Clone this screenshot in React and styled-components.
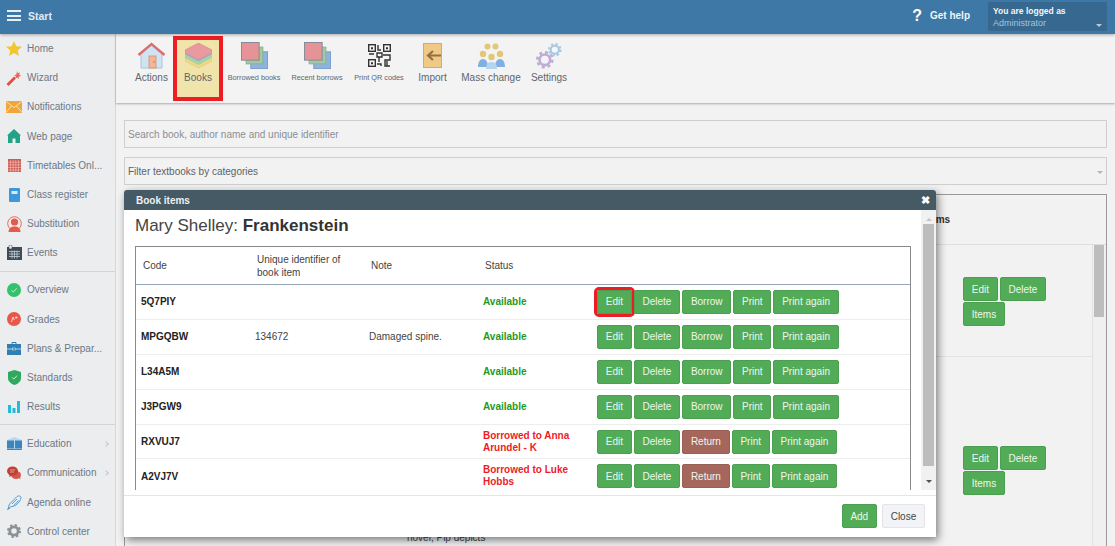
import React from 'react'
import styled, { createGlobalStyle } from 'styled-components'

const GlobalStyle = createGlobalStyle`
  html, body { margin: 0; padding: 0; }
  body {
    font-family: "Liberation Sans", Arial, sans-serif;
    font-size: 10px;
    background: #f2f2f2;
  }
  * { box-sizing: border-box; }
`

const Page = styled.div`
  position: relative;
  width: 1115px;
  height: 546px;
  overflow: hidden;
  background: #f2f2f2;
`
const TopBar = styled.header`
  display: flex;
  align-items: center;
  height: 34px;
  padding: 0 8px 1px 7px;
  background: #3d78a6;
  color: #fff;
  box-shadow: 0 1px 3px rgba(0, 0, 0, .3);
  position: relative;
  z-index: 2;
`
const Burger = styled.div`
  width: 14px;
  height: 11px;
  margin: 0 7px 2px 0;
  border-top: 2px solid #e8eff5;
  border-bottom: 2px solid #e8eff5;
  position: relative;
  &::after {
    content: '';
    position: absolute;
    left: 0;
    right: 0;
    top: 2.5px;
    height: 2px;
    background: #e8eff5;
  }
`
const StartLabel = styled.span`
  margin-bottom: 2px;
  font-size: 10.5px;
  font-weight: 700;
  opacity: .85;
`
const Help = styled.div`
  display: flex;
  align-items: center;
  margin: 0 18px 2px auto;
  font-size: 10px;
  font-weight: 700;
  color: #eef3f7;
`
const HelpMark = styled.span`
  font-size: 16px;
  font-weight: 700;
  margin-right: 8px;
  margin-left: 2px;
  color: #fff;
`
const UserBox = styled.div`
  position: relative;
  width: 119px;
  height: 29px;
  padding: 4px 5px;
  border-radius: 2px;
  background: #37688f;
  line-height: 11.5px;
  &::after {
    content: '';
    position: absolute;
    right: 5px;
    top: 22px;
    border: 3px solid transparent;
    border-top-color: #b9cde0;
  }
`
const UserTitle = styled.div`
  font-size: 8.5px;
  font-weight: 700;
  color: #f2f6f9;
`
const UserName = styled.div`
  font-size: 9px;
  color: #a5c3df;
`
const Layout = styled.div`
  display: flex;
  height: 512px;
`
const Sidebar = styled.nav`
  flex: none;
  width: 116px;
  background: #ecedef;
  border-right: 1px solid #d6d7d9;
`
const NavDivider = styled.div`
  height: 1px;
  margin: 3px 0 3.8px;
  background: #d4d5d7;
`
const NavItem = styled.div`
  display: flex;
  align-items: center;
  height: 29.2px;
  padding-left: 6px;
  color: #6d7884;
  font-size: 10px;
`
const NavIcon = styled.span`
  display: flex;
  flex: none;
  justify-content: center;
  width: 16px;
  margin-right: 5px;
`
const NavText = styled.span`
  white-space: nowrap;
`
const NavChevron = styled.span`
  position: absolute;
  left: 104px;
  width: 4px;
  height: 4px;
  border-top: 1px solid #c5c7ca;
  border-right: 1px solid #c5c7ca;
  transform: rotate(45deg);
`
const Workspace = styled.main`
  flex: 1;
  min-width: 0;
`
const Toolbar = styled.div`
  display: flex;
  height: 69px;
  padding: 2px 0 0 14px;
  background: #f3f3f3;
  box-shadow: 0 1px 2px rgba(0, 0, 0, .3);
`
const Tool = styled.div`
  display: flex;
  flex-direction: column;
  align-items: center;
  width: ${p => p.$width}px;
  height: 65px;
  padding-top: 2px;
  border: 4px solid ${p => (p.$active ? '#ee1c25' : 'transparent')};
  background: ${p => (p.$active ? '#f0e4aa' : 'transparent')};
  color: #5d6670;
`
const ToolIcon = styled.div`
  display: flex;
  align-items: center;
  justify-content: center;
  height: 27px;
`
const ToolLabel = styled.div`
  margin-top: 3px;
  line-height: 12px;
  white-space: nowrap;
  font-size: ${p => (p.$small ? '7.3px' : '10px')};
`
const Content = styled.div`
  padding: 17px 8px 0;
`
const Field = styled.div`
  position: relative;
  display: flex;
  align-items: center;
  height: 28px;
  margin-bottom: 9px;
  padding-left: 3px;
  border: 1px solid #cfcfcf;
  color: ${p => (p.$dark ? '#5c6268' : '#8a8f94')};
  font-size: 10px;
`
const FieldCaret = styled.span`
  position: absolute;
  right: 3px;
  top: 13px;
  border: 3px solid transparent;
  border-top-color: #b5b5b5;
`
const Panel = styled.section`
  height: 400px;
  border: 1px solid #999;
`
const PanelHead = styled.div`
  display: grid;
  grid-template-columns: 799px 1fr;
  align-items: center;
  height: 50px;
  border-bottom: 1px solid #dedede;
  color: #333;
  font-size: 10px;
  font-weight: 700;
`
const PanelBody = styled.div`
  display: flex;
`
const PanelRows = styled.div`
  flex: 1;
`
const PanelRow = styled.div`
  display: grid;
  grid-template-columns: 282px 517px 1fr;
  height: ${p => p.$height}px;
  border-bottom: 1px solid #e2e2e2;
`
const PanelActions = styled.div`
  display: flex;
  flex-wrap: wrap;
  align-content: flex-start;
  row-gap: 1px;
  padding: ${p => p.$top}px 40px 0 39px;
`
const PanelText = styled.div`
  padding-top: 175px;
  color: #444;
  font-size: 10px;
`
const PanelScroll = styled.div`
  flex: none;
  width: 14px;
  height: 400px;
  padding: 0 2px 0 1px;
  background: #f0f0f0;
  border-left: 1px solid #e2e2e2;
`
const PanelThumb = styled.div`
  height: 72px;
  background: #bdbdbd;
`
const Button = styled.button`
  height: 24px;
  margin: 0 2px 0 0;
  padding: 0 7.75px;
  border: 1px solid #4c9f51;
  border-radius: 2px;
  background: ${p => (p.$tone === 'return' ? '#a5665b' : '#52ab57')};
  border-color: ${p => (p.$tone === 'return' ? '#9a5f55' : '#4c9f51')};
  color: #eef6ee;
  font: 10px "Liberation Sans", Arial, sans-serif;
  outline: ${p => (p.$marked ? '3px solid #ee1c25' : 'none')};
  white-space: nowrap;
`
const CloseButton = styled(Button)`
  margin: 0;
  background: #f3f4f8;
  border-color: #e3e4e8;
  color: #444;
`
const Modal = styled.div`
  position: absolute;
  left: 124px;
  top: 190px;
  width: 812px;
  height: 347px;
  border-radius: 3px 3px 0 0;
  background: #fff;
  box-shadow: 2px 3px 8px rgba(0, 0, 0, .5);
`
const ModalHead = styled.div`
  display: flex;
  align-items: center;
  justify-content: space-between;
  height: 20px;
  padding: 0 6px 0 12px;
  border-radius: 3px 3px 0 0;
  background: #455a64;
  color: #eef1f2;
  font-size: 10px;
  font-weight: 700;
`
const ModalClose = styled.span`
  font-size: 11px;
  color: #fff;
`
const ModalBody = styled.div`
  display: flex;
  height: 280px;
`
const ModalMain = styled.div`
  flex: 1;
  min-width: 0;
  padding: 0 10px 0 11px;
  overflow: hidden;
`
const BookTitle = styled.h2`
  height: 36px;
  margin: 0;
  padding-top: 7px;
  color: #444;
  font-size: 17px;
  line-height: 18px;
  font-weight: 400;
  b { font-weight: 700; color: #333; }
`
const Items = styled.div`
  border: 1px solid #8a8a8a;
  border-bottom: 0;
`
const ItemRow = styled.div`
  display: grid;
  grid-template-columns: repeat(4, 114px) 1fr;
  align-items: center;
  height: ${p => (p.$head ? 38 : 34.9)}px;
  border-bottom: 1px solid ${p => (p.$head ? '#94a6b8' : '#eeeeee')};
`
const HeadCell = styled.div`
  padding: 2px 0 0 7px;
  color: #444;
  font-size: 10px;
  line-height: 12.5px;
`
const Code = styled.div`
  padding-left: 5px;
  color: #222;
  font-size: 10px;
  font-weight: 700;
`
const Cell = styled.div`
  padding-left: 5px;
  color: #444;
  font-size: 10px;
`
const Status = styled.div`
  padding: 0 20px 0 5px;
  color: ${p => (p.$borrowed ? '#ee1c25' : '#1f9a1f')};
  font-size: 10px;
  font-weight: 700;
  line-height: 12px;
`
const RowActions = styled.div`
  display: flex;
  padding-left: 5px;
`
const ScrollBar = styled.div`
  display: flex;
  flex: none;
  flex-direction: column;
  align-items: center;
  width: 15px;
  background: #f1f1f1;
`
const ScrollArrow = styled.span`
  height: 14px;
  border: 3px solid transparent;
  border-bottom-color: ${p => (p.$up ? '#c4c4c4' : 'transparent')};
  border-top-color: ${p => (p.$up ? 'transparent' : '#505050')};
  transform: translateY(${p => (p.$up ? '-3px' : '14px')});
`
const ScrollThumb = styled.div`
  width: 11px;
  height: 242px;
  background: #bdbdbd;
`
const ModalFoot = styled.div`
  display: flex;
  justify-content: flex-end;
  gap: 3px;
  height: 47px;
  margin-top: 5px;
  padding: 8px 11px 0;
  border-top: 1px solid #e5e5e5;
`

const Star = () => (
  <svg width="16" height="15" viewBox="0 0 16 15"><path d="M8 0l2.3 5.2 5.7.5-4.3 3.7 1.3 5.6L8 12l-5 3 1.3-5.6L0 5.7l5.700-.5z" fill="#f2c62f" /></svg>
)
const Wand = () => (
  <svg width="16" height="16" viewBox="0 0 16 16"><path d="M.5 14L8 6.500l2 2L2.500 16z" fill="#dd5044" /><path d="M11 1l.8 2.200L14 2.500l-.8 2.300 2 1.200-2.400.6.2 2.400-1.800-1.600-1.900 1.200.6-2.300-2-1.300 2.400-.3z" fill="#e8665a" /></svg>
)
const Mail = () => (
  <svg width="16" height="12" viewBox="0 0 16 12"><rect width="16" height="12" fill="#f0a63a" /><path d="M0 .5l8 6 8-6M0 11.500l5.500-6.500M16 11.500L10.500 5" fill="none" stroke="#fbe0b0" strokeWidth="1" /></svg>
)
const Home = () => (
  <svg width="14" height="14" viewBox="0 0 14 14"><path d="M7 0l7 6.500h-1V14H8.500V9.500h-3V14H1V6.500H0z" fill="#22a386" /></svg>
)
const Grid = () => (
  <svg width="13" height="13" viewBox="0 0 13 13"><rect width="13" height="13" fill="#cf5a50" /><path d="M0 3.200h13M0 5.800h13M0 8.400h13M0 11h13M2.600 1v12M5.200 1v12M7.800 1v12M10.400 1v12" stroke="#f0b9b3" strokeWidth=".7" /></svg>
)
const Notebook = () => (
  <svg width="11" height="14" viewBox="0 0 11 14"><rect width="11" height="14" rx="1" fill="#3e97d8" /><rect x="2.500" y="3" width="6" height="3" fill="#d5e9f7" /></svg>
)
const Person = () => (
  <svg width="15" height="16" viewBox="0 0 15 16"><circle cx="7.500" cy="7.500" r="6.800" fill="none" stroke="#e9695c" strokeWidth="1" /><circle cx="7.500" cy="6" r="3.600" fill="#e55a4d" /><path d="M1.500 16c.3-4 2.500-5.500 6-5.500s5.700 1.500 6 5.500z" fill="#e55a4d" /></svg>
)
const Calendar = () => (
  <svg width="15" height="15" viewBox="0 0 15 15"><rect y="2" width="15" height="13" fill="#3d4c58" /><rect x="2" y="0" width="3" height="4" rx="1" fill="#eef" stroke="#3d4c58" strokeWidth=".6" /><path d="M2 6.500h11M2 9h11M2 11.500h11M5 5.500v8M7.500 5.500v8M10 5.500v8" stroke="#c7cdd2" strokeWidth=".8" /></svg>
)
const Check = () => (
  <svg width="14" height="14" viewBox="0 0 14 14"><circle cx="7" cy="7" r="7" fill="#34c26d" /><path d="M4.500 7.300l1.800 1.800 3.300-3.700" fill="none" stroke="#c5f0d5" strokeWidth="1" /></svg>
)
const Grade = () => (
  <svg width="14" height="14" viewBox="0 0 14 14"><circle cx="7" cy="7" r="7" fill="#e8574a" /><path d="M4.500 10l1.500-5 1.300 3M8 5.500h2.500M9.200 4.300v2.400" fill="none" stroke="#f8d0cb" strokeWidth="1" /></svg>
)
const Briefcase = () => (
  <svg width="14" height="13" viewBox="0 0 14 13"><path d="M5 2V.5h4V2" fill="none" stroke="#2f7fb5" /><rect y="2" width="14" height="11" fill="#2f7fb5" /><path d="M0 7h5.500M8.500 7H14" stroke="#cfe3f0" strokeWidth=".8" /><rect x="5.500" y="6" width="3" height="2" fill="none" stroke="#cfe3f0" strokeWidth=".6" /></svg>
)
const Shield = () => (
  <svg width="13" height="15" viewBox="0 0 13 15"><path d="M6.500 0l6.500 2v6c0 3.500-3 5.800-6.500 7C3 13.800 0 11.500 0 8V2z" fill="#2fa860" /><path d="M4 7.300l1.800 1.800 3.200-3.500" fill="none" stroke="#c5f0d5" strokeWidth="1" /></svg>
)
const Bars = () => (
  <svg width="12" height="12" viewBox="0 0 12 12"><path d="M0 4h3v8H0zM4.500 7h3v5h-3zM9 0h3v12H9z" fill="#22bcd8" /></svg>
)
const OpenBook = () => (
  <svg width="15" height="13" viewBox="0 0 15 13"><path d="M7.500 0L15 3v9H0V3z" fill="#bcd8ec" /><path d="M0 3.500h7v8H0zM8 3.500h7v8H8z" fill="#3a85bd" /><path d="M0 12.500h15" stroke="#3a85bd" /></svg>
)
const Chat = () => (
  <svg width="14" height="14" viewBox="0 0 14 14"><ellipse cx="9" cy="9" rx="5" ry="4" fill="#d0584c" /><path d="M11 11l2.500 2.500-.5-4z" fill="#d0584c" /><ellipse cx="5.500" cy="5" rx="5.500" ry="4.500" fill="#c23f33" /><path d="M3 8l-1 3 4-2z" fill="#c23f33" /><path d="M3 4h5M3 6h4" stroke="#f3c9c4" strokeWidth=".7" /></svg>
)
const Pen = () => (
  <svg width="15" height="15" viewBox="0 0 15 15"><path d="M1 14l1.500-5L10 1.500c2-1.500 4 0 4 1 0 3-3 6-5.500 8L3.500 12z" fill="none" stroke="#4e9fd8" strokeWidth="1" /><path d="M0 15l3-2M5 9l5-5M7 10.500l4.500-5" stroke="#4e9fd8" strokeWidth="1" /></svg>
)
const Gear = () => (
  <svg width="14" height="14" viewBox="0 0 20 20">
    <circle cx="10" cy="10" r="6" fill="none" stroke="#8b9296" strokeWidth="4" />
    <circle cx="10" cy="10" r="8.500" fill="none" stroke="#8b9296" strokeWidth="3" strokeDasharray="3.300 3.380" />
  </svg>
)

const HouseTool = () => (
  <svg width="29" height="27" viewBox="0 0 29 27">
    <path d="M4 12L14.500 3 25 12v14H4z" fill="#cfe3f3" stroke="#a7c4dc" />
    <path d="M1.500 13L14.500 2l13 11" fill="none" stroke="#d9706c" strokeWidth="2.400" />
    <rect x="12" y="14" width="7" height="12" fill="#f2b896" stroke="#d88e68" strokeWidth=".8" />
    <circle cx="17" cy="20" r=".7" fill="#a9603c" />
  </svg>
)
const StackTool = () => (
  <svg width="27" height="26" viewBox="0 0 27 26">
    <path d="M0 18l13.500 7L27 18v-4H0z" fill="#efd889" stroke="#dfc56f" strokeWidth=".6" />
    <path d="M0 15l13.500 7L27 15v-4H0z" fill="#a9d3a0" />
    <path d="M0 11.500l13.500 7 13.500-7v-4H0z" fill="#8eb8e5" />
    <path d="M0 7l13.500-7L27 7v3l-13.500 7L0 10z" fill="#e99a9f" stroke="#d98589" strokeWidth=".6" />
  </svg>
)
const CardsTool = () => (
  <svg width="29" height="27" viewBox="0 0 29 29">
    <rect x="10.500" y="10.500" width="18" height="18" fill="#8db3e2" stroke="#7a9dc9" />
    <rect x="5.500" y="5.500" width="18" height="18" fill="#a3c9a0" stroke="#8bb088" />
    <rect x=".5" y=".5" width="19" height="19" fill="#e59396" stroke="#7d8a96" />
  </svg>
)
const QrTool = () => (
  <svg width="23" height="23" viewBox="0 0 23 23" fill="none" stroke="#333" strokeWidth="1.400">
    <rect x=".7" y=".7" width="6.600" height="6.600" />
    <rect x="15.700" y=".7" width="6.600" height="6.600" />
    <rect x=".7" y="15.700" width="6.600" height="6.600" />
    <path d="M3 3.200h2v2H3zM18 3.200h2v2h-2zM3 18.200h2v2H3z" fill="#333" stroke="none" />
    <path d="M10 1v5h3M9 9h5v4H9zM1 10h5M11 13v5M9 20h4v2M15 11h7v5h-5v6h5M19 17v5" />
  </svg>
)
const ImportTool = () => (
  <svg width="19" height="25" viewBox="0 0 19 25">
    <rect x=".5" y=".5" width="18" height="24" fill="#f0c987" stroke="#c9ad80" />
    <path d="M6 12.500h12M10 8l-5 4.500 5 4.500" fill="none" stroke="#94723f" strokeWidth="2.200" />
  </svg>
)
const PeopleTool = () => (
  <svg width="27" height="26" viewBox="0 0 27 26">
    <circle cx="9.500" cy="3.500" r="3" fill="#e3c777" />
    <circle cx="17.500" cy="3.500" r="3" fill="#e3c777" />
    <circle cx="5" cy="11" r="3.200" fill="#e3c777" />
    <circle cx="22" cy="11" r="3.200" fill="#e3c777" />
    <path d="M0 24c0-5 2-8 5-8s5 3 5 8zM17 24c0-5 2-8 5-8s5 3 5 8z" fill="#7fb0e0" />
    <path d="M8 26c0-5 2-7 5.500-7s5.500 2 5.500 7z" fill="#b5d4ee" />
    <circle cx="13.500" cy="14" r="3.200" fill="#e3c777" />
  </svg>
)
const GearsTool = () => (
  <svg width="26" height="26" viewBox="0 0 26 26">
    <g transform="translate(12 0) scale(.68)"><circle cx="10" cy="10" r="6" fill="#f3f7fa" stroke="#a8c8e0" strokeWidth="3" /><circle cx="10" cy="10" r="8.500" fill="none" stroke="#a8c8e0" strokeWidth="3" strokeDasharray="3.300 3.380" /></g>
    <g transform="translate(0 8) scale(.88)"><circle cx="10" cy="10" r="6" fill="#f5f2f9" stroke="#bdaed4" strokeWidth="3" /><circle cx="10" cy="10" r="8.500" fill="none" stroke="#bdaed4" strokeWidth="3" strokeDasharray="3.300 3.380" /></g>
  </svg>
)

const navTop = [
  ['Home', Star], ['Wizard', Wand], ['Notifications', Mail], ['Web page', Home],
  ['Timetables Onl...', Grid], ['Class register', Notebook], ['Substitution', Person], ['Events', Calendar],
]
const navMiddle = [
  ['Overview', Check], ['Grades', Grade], ['Plans & Prepar...', Briefcase], ['Standards', Shield], ['Results', Bars],
]
const navBottom = [
  ['Education', OpenBook, true], ['Communication', Chat, true], ['Agenda online', Pen], ['Control center', Gear],
]

const tools = [
  { label: 'Actions', width: 43, icon: HouseTool },
  { label: 'Books', width: 50, icon: StackTool, active: true },
  { label: 'Borrowed books', width: 62, icon: CardsTool, small: true },
  { label: 'Recent borrows', width: 64, icon: CardsTool, small: true },
  { label: 'Print QR codes', width: 60, icon: QrTool, small: true },
  { label: 'Import', width: 47, icon: ImportTool },
  { label: 'Mass change', width: 70, icon: PeopleTool },
  { label: 'Settings', width: 46, icon: GearsTool },
]

const items = [
  { code: '5Q7PIY', marked: true },
  { code: 'MPGQBW', id: '134672', note: 'Damaged spine.' },
  { code: 'L34A5M' },
  { code: 'J3PGW9' },
  { code: 'RXVUJ7', borrowedBy: 'Anna Arundel - K' },
  { code: 'A2VJ7V', borrowedBy: 'Luke Hobbs' },
]

const NavGroup = ({ list }) => list.map(([label, Icon, more]) => (
  <NavItem key={label}>
    <NavIcon><Icon /></NavIcon>
    <NavText>{label}</NavText>
    {more && <NavChevron />}
  </NavItem>
))

const App = () => (
  <Page>
    <GlobalStyle />
    <TopBar>
      <Burger />
      <StartLabel>Start</StartLabel>
      <Help><HelpMark>?</HelpMark>Get help</Help>
      <UserBox>
        <UserTitle>You are logged as</UserTitle>
        <UserName>Administrator</UserName>
      </UserBox>
    </TopBar>

    <Layout>
      <Sidebar>
        <NavGroup list={navTop} />
        <NavDivider />
        <NavGroup list={navMiddle} />
        <NavDivider />
        <NavGroup list={navBottom} />
      </Sidebar>

      <Workspace>
        <Toolbar>
          {tools.map(tool => (
            <Tool key={tool.label} $width={tool.width} $active={tool.active}>
              <ToolIcon><tool.icon /></ToolIcon>
              <ToolLabel $small={tool.small}>{tool.label}</ToolLabel>
            </Tool>
          ))}
        </Toolbar>

        <Content>
          <Field>Search book, author name and unique identifier</Field>
          <Field $dark>Filter textbooks by categories<FieldCaret /></Field>
          <Panel>
            <PanelHead>
              <span />
              <span>Items</span>
            </PanelHead>
            <PanelBody>
              <PanelRows>
                <PanelRow $height={112}>
                  <span />
                  <span />
                  <PanelActions $top={32}>
                    <Button>Edit</Button>
                    <Button>Delete</Button>
                    <Button>Items</Button>
                  </PanelActions>
                </PanelRow>
                <PanelRow $height={240}>
                  <span />
                  <PanelText>novel, Pip depicts</PanelText>
                  <PanelActions $top={89}>
                    <Button>Edit</Button>
                    <Button>Delete</Button>
                    <Button>Items</Button>
                  </PanelActions>
                </PanelRow>
              </PanelRows>
              <PanelScroll><PanelThumb /></PanelScroll>
            </PanelBody>
          </Panel>
        </Content>
      </Workspace>
    </Layout>

    <Modal>
      <ModalHead>
        Book items
        <ModalClose>✖</ModalClose>
      </ModalHead>
      <ModalBody>
        <ModalMain>
          <BookTitle>Mary Shelley: <b>Frankenstein</b></BookTitle>
          <Items>
            <ItemRow $head>
              <HeadCell>Code</HeadCell>
              <HeadCell>Unique identifier of book item</HeadCell>
              <HeadCell>Note</HeadCell>
              <HeadCell>Status</HeadCell>
            </ItemRow>
            {items.map(item => (
              <ItemRow key={item.code}>
                <Code>{item.code}</Code>
                <Cell>{item.id}</Cell>
                <Cell>{item.note}</Cell>
                <Status $borrowed={!!item.borrowedBy}>
                  {item.borrowedBy ? `Borrowed to ${item.borrowedBy}` : 'Available'}
                </Status>
                <RowActions>
                  <Button $marked={item.marked}>Edit</Button>
                  <Button>Delete</Button>
                  {item.borrowedBy
                    ? <Button $tone="return">Return</Button>
                    : <Button>Borrow</Button>}
                  <Button>Print</Button>
                  <Button>Print again</Button>
                </RowActions>
              </ItemRow>
            ))}
          </Items>
        </ModalMain>
        <ScrollBar>
          <ScrollArrow $up />
          <ScrollThumb />
          <ScrollArrow />
        </ScrollBar>
      </ModalBody>
      <ModalFoot>
        <Button>Add</Button>
        <CloseButton>Close</CloseButton>
      </ModalFoot>
    </Modal>
  </Page>
)

export default App
